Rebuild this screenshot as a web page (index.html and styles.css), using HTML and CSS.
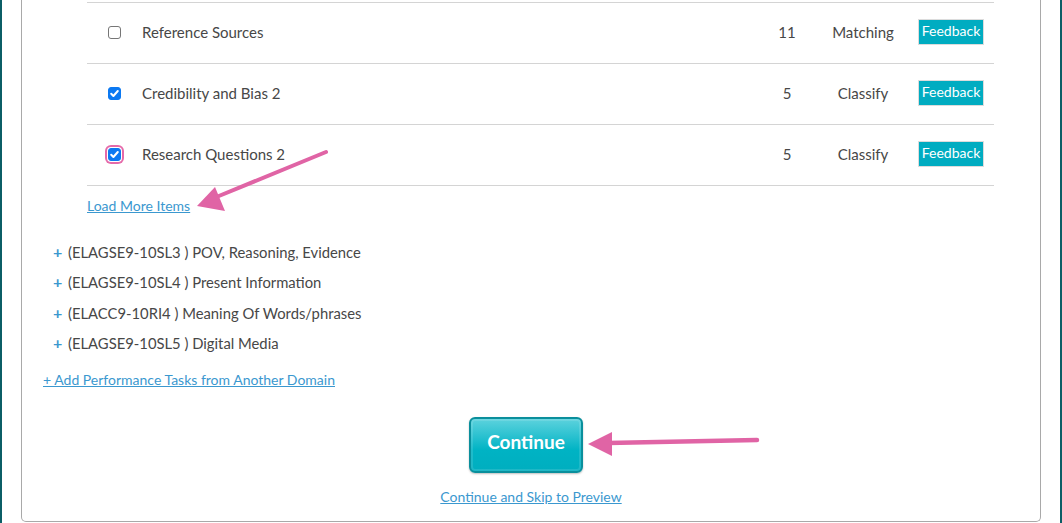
FILE: index.html
```html
<!DOCTYPE html>
<html lang="en">
<head>
  <meta charset="UTF-8">
  <title>Select Performance Tasks</title>
  <link rel="stylesheet" href="styles.css">
</head>
<body>

  <div class="frame">
    <div class="panel">

      <div class="task-list">
        <div class="task-row">
          <span class="check"></span>
          <span class="task-name">Reference Sources</span>
          <span class="task-count">11</span>
          <span class="task-type">Matching</span>
          <span><button class="feedback">Feedback</button></span>
        </div>
        <div class="task-row">
          <span class="check checked">
            <svg viewBox="0 0 13 13" width="13" height="13"><path d="M3.2 6.8 L5.4 9 L9.8 4" fill="none" stroke="#fff" stroke-width="2" stroke-linecap="round" stroke-linejoin="round"/></svg>
          </span>
          <span class="task-name">Credibility and Bias 2</span>
          <span class="task-count">5</span>
          <span class="task-type">Classify</span>
          <span><button class="feedback">Feedback</button></span>
        </div>
        <div class="task-row">
          <span class="check checked marked">
            <svg viewBox="0 0 13 13" width="13" height="13"><path d="M3.2 6.8 L5.4 9 L9.8 4" fill="none" stroke="#fff" stroke-width="2" stroke-linecap="round" stroke-linejoin="round"/></svg>
          </span>
          <span class="task-name">Research Questions 2</span>
          <span class="task-count">5</span>
          <span class="task-type">Classify</span>
          <span><button class="feedback">Feedback</button></span>
        </div>
      </div>

      <a href="#" class="link load-more">Load More Items</a>

      <ul class="standards">
        <li><span class="plus">+</span>(ELAGSE9-10SL3 ) POV, Reasoning, Evidence</li>
        <li><span class="plus">+</span>(ELAGSE9-10SL4 ) Present Information</li>
        <li><span class="plus">+</span>(ELACC9-10RI4 ) Meaning Of Words/phrases</li>
        <li><span class="plus">+</span>(ELAGSE9-10SL5 ) Digital Media</li>
      </ul>

      <a href="#" class="link add-domain">+ Add Performance Tasks from Another Domain</a>

      <div class="actions">
        <button class="continue">Continue</button>
        <a href="#" class="link skip">Continue and Skip to Preview</a>
      </div>

    </div>

    <!-- annotation arrows drawn over the page -->
    <svg class="notes" width="1062" height="523" viewBox="0 0 1062 523">
      <line x1="324" y1="152" x2="212" y2="198" stroke="#e064a5" stroke-width="4" stroke-linecap="round"/>
      <polygon points="195,206 213,187 223,211" fill="#e064a5"/>
      <line x1="755" y1="440" x2="606" y2="443" stroke="#e064a5" stroke-width="4.5" stroke-linecap="round"/>
      <polygon points="586,444 610,432 610,456" fill="#e064a5"/>
    </svg>
  </div>

</body>
</html>
```

FILE: styles.css
```css
body {
  margin: 0;
  font-family: Lato, "Open Sans", sans-serif;
  color: #474747;
  background-color: #ffffff;
}
.frame {
  position: relative;
  border-left: 2px solid #0b5e66;
  border-right: 2px solid #0b5e66;
  padding: 0 19px;
  height: 523px;
  box-sizing: border-box;
  overflow: hidden;
}
.panel {
  border: 1px solid #a9a9a9;
  border-top: none;
  border-radius: 0 0 5px 5px;
  padding: 2px 46px 14px 0;
  display: flex;
  flex-direction: column;
}
.task-list {
  margin-left: 65px;
  border-top: 1px solid #d4d4d4;
}
.task-row {
  display: grid;
  grid-template-columns: 34px 1fr 62px 100px 66px;
  align-items: center;
  height: 60px;
  padding: 0 10px 0 21px;
  border-bottom: 1px solid #d4d4d4;
  font-size: 15px;
  line-height: 18px;
}
.task-row > span {
  margin-top: -2px;
}
.check {
  width: 13px;
  height: 13px;
  box-sizing: border-box;
  border: 1px solid #767676;
  border-radius: 3px;
  position: relative;
}
.check svg {
  position: absolute;
  left: -1px;
  top: -1px;
}
.check.checked {
  background-color: #0c79f2;
  border-color: #0c79f2;
}
.check.marked {
  box-shadow: 0 0 0 1px #fff, 0 0 0 3px #e56aa9;
}
.task-count {
  text-align: center;
}
.task-type {
  text-align: center;
  padding-right: 10px;
}
.feedback {
  display: block;
  width: 66px;
  height: 26px;
  background-color: #00acc1;
  color: #fff;
  border: 1px solid #dcdcdc;
  font-family: Lato, sans-serif;
  font-size: 14px;
  padding: 0 0 3px;
  cursor: pointer;
}
.link {
  color: #3b98cf;
  font-size: 14px;
  line-height: 20px;
  text-decoration: underline;
}
.load-more {
  align-self: flex-start;
  margin: 10px 0 0 65px;
}
.standards {
  list-style: none;
  margin: 21px 0 0;
  padding: 0 0 0 31px;
}
.standards li {
  font-size: 14.8px;
  line-height: 30.3px;
}
.plus {
  display: inline-block;
  width: 15px;
  color: #3b98cf;
  font-weight: bold;
  font-size: 16px;
}
.add-domain {
  align-self: flex-start;
  margin: 12px 0 0 21px;
}
.actions {
  display: flex;
  flex-direction: column;
  align-items: center;
  margin-top: 27px;
  margin-left: 46px;
}
.continue {
  width: 114px;
  height: 56px;
  margin-right: 10px;
  border: 2px solid #0a8f9c;
  border-radius: 6px;
  background: linear-gradient(#5cd2dd 0%, #27c0cf 35%, #00b3c4 60%, #00aebf 100%);
  box-shadow: inset 0 0 0 2px rgba(255, 255, 255, 0.12), 0 1px 2px rgba(0, 0, 0, 0.25);
  color: #fff;
  font-family: Lato, sans-serif;
  font-weight: bold;
  font-size: 19px;
  padding-bottom: 8px;
  cursor: pointer;
}
.skip {
  margin-top: 14px;
}
.notes {
  position: absolute;
  left: 0;
  top: 0;
  pointer-events: none;
}
```
